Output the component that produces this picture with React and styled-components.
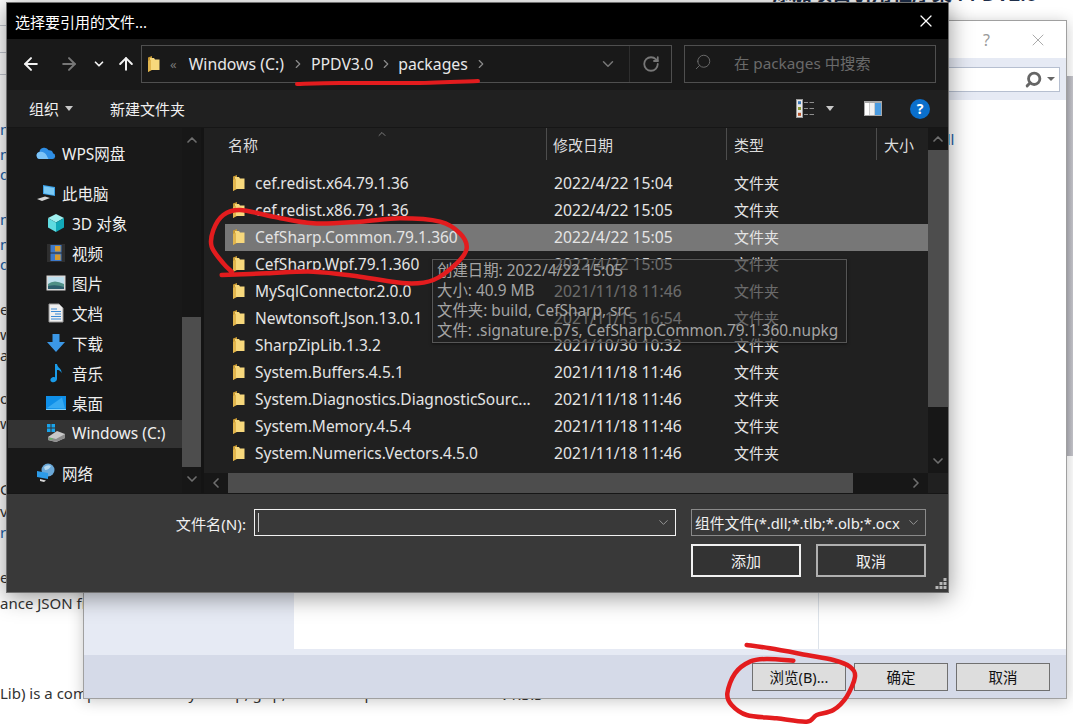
import React from "react";
import styled, { createGlobalStyle } from "styled-components";
import {
  ArrowLeft,
  ArrowRight,
  ArrowUp,
  ChevronDown,
  ChevronLeft,
  ChevronRight,
  ChevronUp,
  RotateCw,
  Search,
  X,
} from "lucide-react";

const FONT = `"Noto Sans", "Noto Sans CJK SC", sans-serif`;

const GlobalStyle = createGlobalStyle`
  html, body {
    margin: 0;
    padding: 0;
    background: #fff;
  }
  body {
    font-family: ${FONT};
    font-size: 15px;
  }
`;

const Desktop = styled.div`
  position: relative;
  width: 1073px;
  height: 725px;
  overflow: hidden;
  background: #fff;
`;

/* page behind the two windows */
const PageLine = styled.div`
  position: absolute;
  left: 0;
  top: ${(p) => p.$top}px;
  height: 22px;
  line-height: 22px;
  white-space: nowrap;
  font-size: 15px;
  color: ${(p) => (p.$link ? "#1c62a8" : "#333")};
`;

const PageRule = styled.div`
  position: absolute;
  left: 0;
  top: ${(p) => p.$top}px;
  width: 8px;
  height: 1px;
  background: #c4c8d0;
`;

const PageHeading = styled.div`
  position: absolute;
  left: 772px;
  top: -19px;
  font-size: 20px;
  line-height: 26px;
  font-weight: 600;
  color: #1f2f4a;
  white-space: nowrap;
`;

const PageVersion = styled.div`
  position: absolute;
  left: 500px;
  top: 683px;
  font-size: 15px;
  line-height: 22px;
  color: #333;
`;

const PageScroll = styled.div`
  position: absolute;
  right: 0;
  top: 76px;
  width: 8px;
  height: 380px;
  background: linear-gradient(90deg, #a9a9b0, #c8c8ce);
`;

/* reference manager window, mostly hidden */
const ManagerWindow = styled.div`
  position: absolute;
  left: 83px;
  top: 20px;
  width: 982px;
  height: 677px;
  display: flex;
  flex-direction: column;
  background: #fff;
  border: 1px solid #a0a0a0;
  box-shadow: 0 2px 14px rgba(0, 0, 0, 0.22);
`;

const ManagerTitle = styled.div`
  height: 37px;
  display: flex;
  align-items: center;
  justify-content: flex-end;
  flex-shrink: 0;
  gap: 38px;
  padding-right: 18px;
  color: #9a9a9a;
`;

const HelpMark = styled.span`
  font-size: 16px;
  line-height: 1;
`;

const ManagerSearchRow = styled.div`
  height: 42px;
  flex-shrink: 0;
  display: flex;
  align-items: center;
  justify-content: flex-end;
  padding-right: 6px;
  background: #e6eaf4;
`;

const ManagerSearch = styled.div`
  width: 300px;
  height: 25px;
  display: flex;
  align-items: center;
  justify-content: flex-end;
  gap: 5px;
  padding-right: 4px;
  box-sizing: border-box;
  background: #fff;
  border: 1px solid #b6bfd0;
`;

const SmallCaret = styled.span`
  width: 0;
  height: 0;
  border-left: 4px solid transparent;
  border-right: 4px solid transparent;
  border-top: 4px solid #666;
`;

const ManagerBody = styled.div`
  flex: 1;
  display: flex;
  background: #fff;
`;

const ManagerLeft = styled.div`
  width: 210px;
  background: #e6eaf4;
`;

const ManagerCenter = styled.div`
  width: 524px;
  border-right: 1px solid #dde3ea;
`;

const ManagerRight = styled.div`
  flex: 1;
  padding: 29px 0 0 50px;
  font-size: 15px;
  line-height: 20px;
  color: #1c62a8;
  white-space: nowrap;
`;

const ManagerStrip = styled.div`
  height: 6px;
  flex-shrink: 0;
  background: #e6eaf4;
`;

const ManagerFooter = styled.div`
  height: 43px;
  flex-shrink: 0;
  display: flex;
  align-items: center;
  justify-content: flex-end;
  gap: 8px;
  padding-right: 16px;
  background: #d5dae8;
`;

const ManagerButton = styled.div`
  width: 94px;
  height: 28px;
  box-sizing: border-box;
  display: flex;
  align-items: center;
  justify-content: center;
  background: #dddddd;
  border: 1px solid #707070;
  color: #111;
  font-size: 14.5px;
`;

/* file picker dialog */
const Dialog = styled.div`
  position: absolute;
  left: 6px;
  top: 2px;
  width: 941px;
  height: 589px;
  display: flex;
  flex-direction: column;
  background: #202020;
  border: 1px solid #707070;
  box-shadow: 0 4px 22px rgba(0, 0, 0, 0.42);
  color: #fff;
`;

const TitleBar = styled.div`
  height: 36px;
  flex-shrink: 0;
  display: flex;
  align-items: center;
  justify-content: space-between;
  padding: 0 12px 0 8px;
  background: #000;
  font-size: 15px;
`;

const NavBar = styled.div`
  height: 51px;
  flex-shrink: 0;
  display: flex;
  align-items: center;
  padding: 0 0 2px 5px;
  box-sizing: border-box;
  background: #191919;
`;

const NavSlot = styled.div`
  width: ${(p) => p.$w}px;
  display: flex;
  justify-content: center;
  flex-shrink: 0;
  color: ${(p) => (p.$dim ? "#777" : "#f2f2f2")};
`;

const PathBox = styled.div`
  width: 531px;
  height: 38px;
  box-sizing: border-box;
  display: flex;
  align-items: center;
  border: 1px solid #4f4f4f;
  padding-left: 5px;
  flex-shrink: 0;
`;

const Crumbs = styled.div`
  flex: 1;
  display: flex;
  align-items: center;
  color: #e8e8e8;
  font-size: 15.8px;
`;

const CrumbText = styled.span`
  margin-left: ${(p) => p.$ml || 0}px;
`;

const CrumbMark = styled.span`
  display: flex;
  margin-left: ${(p) => p.$ml}px;
  color: #8a8a8a;
`;

const GreyQuote = styled.span`
  margin-left: 10px;
  color: #777;
  font-size: 13px;
`;

const PathDrop = styled.div`
  width: 42px;
  display: flex;
  justify-content: center;
  color: #777;
`;

const PathRefresh = styled.div`
  width: 41px;
  height: 100%;
  display: flex;
  align-items: center;
  justify-content: center;
  border-left: 1px solid #2e2e2e;
  color: #777;
`;

const SearchBox = styled.div`
  width: 252px;
  height: 38px;
  margin-left: 12px;
  box-sizing: border-box;
  display: flex;
  align-items: center;
  gap: 22px;
  padding: 0 0 3px 9px;
  border: 1px solid #4f4f4f;
  color: #6a6a6a;
  font-size: 15.3px;
`;

const FlipIcon = styled.span`
  display: flex;
  transform: scaleX(-1);
`;

const ToolBar = styled.div`
  height: 38px;
  flex-shrink: 0;
  display: flex;
  align-items: center;
  padding-left: 22px;
  background: #202020;
  color: #f0f0f0;
  font-size: 15px;
  border-bottom: 1px solid #161616;
  box-sizing: border-box;
`;

const ToolLabel = styled.span`
  margin-left: ${(p) => p.$ml || 0}px;
`;

const ToolRight = styled.div`
  margin-left: auto;
  display: flex;
  align-items: center;
  padding-right: 18px;
`;

const ToolCaret = styled.span`
  width: 0;
  height: 0;
  margin-left: ${(p) => p.$ml}px;
  margin-right: ${(p) => p.$mr || 0}px;
  border-left: 4px solid transparent;
  border-right: 4px solid transparent;
  border-top: 5px solid #c8c8c8;
`;

const HelpBadge = styled.span`
  width: 20px;
  height: 20px;
  margin-left: 28px;
  border-radius: 50%;
  display: flex;
  align-items: center;
  justify-content: center;
  background: #0a6fcc;
  color: #fff;
  font-size: 14px;
  font-weight: 700;
`;

const Body = styled.div`
  flex: 1;
  min-height: 0;
  display: flex;
`;

const Sidebar = styled.div`
  width: 194px;
  display: flex;
  flex-shrink: 0;
  background: #191919;
  border-right: 3px solid #141414;
`;

const TreeList = styled.div`
  width: 175px;
  padding-top: 12px;
  flex-shrink: 0;
`;

const TreeGroup = styled.div`
  display: flex;
  flex-direction: column;
  gap: 2px;
  margin-bottom: 12px;
`;

const TreeItem = styled.div`
  height: 28px;
  display: flex;
  align-items: center;
  gap: 6px;
  margin-left: 1px;
  padding-left: ${(p) => (p.$child ? 38 : 28)}px;
  padding-bottom: 2px;
  box-sizing: border-box;
  background: ${(p) => (p.$active ? "#333" : "transparent")};
  color: #f0f0f0;
  font-size: 15.5px;
  white-space: nowrap;
`;

const VScroll = styled.div`
  width: ${(p) => p.$w}px;
  flex-shrink: 0;
  display: flex;
  flex-direction: column;
  background: #171717;
  color: #6e6e6e;
`;

const ScrollCap = styled.div`
  height: ${(p) => p.$h}px;
  display: flex;
  align-items: center;
  justify-content: center;
  flex-shrink: 0;
`;

const VSpacer = styled.div`
  height: ${(p) => p.$h}px;
  flex-shrink: 0;
`;

const ScrollThumb = styled.div`
  height: ${(p) => p.$h}px;
  flex-shrink: 0;
  background: #4d4d4d;
`;

const ListPanel = styled.div`
  flex: 1;
  min-width: 0;
  display: flex;
  flex-direction: column;
`;

const ListMain = styled.div`
  flex: 1;
  min-height: 0;
  display: flex;
`;

const ListArea = styled.div`
  position: relative;
  flex: 1;
  min-width: 0;
`;

const HeaderRow = styled.div`
  height: 34px;
  display: grid;
  grid-template-columns: 342px 180px 150px 1fr;
  color: #dcdcdc;
  font-size: 15px;
`;

const HeaderCell = styled.div`
  display: flex;
  align-items: center;
  height: 32px;
  padding-left: ${(p) => p.$pl}px;
  border-left: ${(p) => (p.$first ? "none" : "1px solid #4d4d4d")};
  white-space: nowrap;
`;

const SortMark = styled.span`
  position: absolute;
  left: 172px;
  top: 0;
  display: flex;
  color: #9a9a9a;
`;

const Rows = styled.div`
  padding: 8px 0 0 21px;
`;

const FileRow = styled.div`
  height: 27px;
  display: grid;
  grid-template-columns: 321px 180px 150px;
  align-items: center;
  padding-bottom: 2px;
  box-sizing: border-box;
  background: ${(p) => (p.$selected ? "#777" : "transparent")};
  color: #e4e4e4;
  white-space: nowrap;
`;

const NameCell = styled.div`
  display: flex;
  align-items: center;
  gap: 10px;
  padding-left: 7px;
  font-size: 15.5px;
`;

const DataCell = styled.div`
  padding-left: 8px;
  font-size: ${(p) => (p.$date ? "15.7px" : "15px")};
`;

const HScroll = styled.div`
  height: 20px;
  flex-shrink: 0;
  display: flex;
  align-items: center;
  color: #6e6e6e;
`;

const HTrack = styled.div`
  flex: 1;
  height: 100%;
  display: flex;
  justify-content: flex-start;
  background: #171717;
`;

const HCap = styled.div`
  width: ${(p) => p.$w}px;
  display: flex;
  align-items: center;
  justify-content: center;
  flex-shrink: 0;
  margin-left: ${(p) => (p.$end ? "auto" : 0)};
`;

const HThumb = styled.div`
  width: 625px;
  flex-shrink: 0;
  background: #4d4d4d;
`;

const HCorner = styled.div`
  width: 20px;
  flex-shrink: 0;
`;

const InfoTip = styled.div`
  position: absolute;
  left: 228px;
  top: 131px;
  width: 415px;
  height: 84px;
  padding: 1px 0 0 4px;
  box-sizing: border-box;
  background: rgba(32, 32, 32, 0.62);
  border: 1px solid #565656;
  box-shadow: 0 1px 3px rgba(0, 0, 0, 0.5);
  color: #a4a4a4;
  font-size: 15.4px;
  line-height: 20px;
  white-space: nowrap;
`;

const Footer = styled.div`
  height: 99px;
  flex-shrink: 0;
  position: relative;
  display: grid;
  grid-template-columns: 239px 422px 235px;
  grid-template-rows: 27px 33px;
  row-gap: 8px;
  padding-top: 15px;
  box-sizing: border-box;
  background: #393939;
  border-top: 1px solid #161616;
`;

const FileLabel = styled.div`
  display: flex;
  align-items: center;
  justify-content: flex-end;
  color: #f0f0f0;
  font-size: 15.2px;
`;

const FileInput = styled.div`
  margin-left: 8px;
  width: 422px;
  height: 27px;
  box-sizing: border-box;
  display: flex;
  align-items: center;
  justify-content: space-between;
  padding: 0 4px 0 3px;
  border: 1px solid #f2f2f2;
  color: #aaa;
`;

const TextCaret = styled.span`
  width: 1px;
  height: 19px;
  background: #cfcfcf;
`;

const FilterBox = styled.div`
  margin-left: 23px;
  width: 235px;
  height: 27px;
  box-sizing: border-box;
  display: flex;
  align-items: center;
  justify-content: space-between;
  padding: 0 4px 0 3px;
  border: 1px solid #8a8a8a;
  color: #aaa;
`;

const FilterText = styled.span`
  width: 208px;
  overflow: hidden;
  white-space: nowrap;
  color: #f0f0f0;
  font-size: 14.8px;
`;

const ButtonRow = styled.div`
  grid-column: 3;
  margin-left: 23px;
  width: 235px;
  display: flex;
  justify-content: space-between;
`;

const DialogButton = styled.div`
  width: 110px;
  height: 33px;
  box-sizing: border-box;
  display: flex;
  align-items: center;
  justify-content: center;
  border: 2px solid ${(p) => (p.$primary ? "#f2f2f2" : "#b0b0b0")};
  background: #333;
  color: #f0f0f0;
  font-size: 15px;
`;

const Grip = styled.svg`
  position: absolute;
  right: 1px;
  bottom: 2px;
`;

const InkLayer = styled.svg`
  position: absolute;
  inset: 0;
  pointer-events: none;
`;

const FolderIcon = () => (
  <svg width="13" height="18" viewBox="0 0 13 18">
    <path d="M1 2.5 L5 1 L5 15 L1 17 Z" fill="#c99a34" />
    <path d="M3 3 H7 L8 4.5 H12.5 V15 H3 Z" fill="#f7d87c" />
    <path d="M1 6 L4 4.5 V15 L1 17 Z" fill="#e2b64e" />
  </svg>
);

const CloudIcon = () => (
  <svg width="20" height="16" viewBox="0 0 20 16">
    <path d="M4 14 a3.6 3.6 0 0 1 -.6-7.1 a5 5 0 0 1 9.3-1.6 a3.6 3.6 0 0 1 4.3 3 a2.9 2.9 0 0 1 -.6 5.7 Z" fill="#2f8fe6" />
    <path d="M4 14 a3.6 3.6 0 0 1 -.6-7.1 c3 -.8 6 1 7 3 l2 4 Z" fill="#7cc3f7" />
  </svg>
);

const ComputerIcon = () => (
  <svg width="20" height="20" viewBox="0 0 20 20">
    <path d="M7 2 L19 4 V13 L7 11 Z" fill="#3aa0e8" />
    <path d="M8 3.2 L18 5 V12 L8 10.2 Z" fill="#7ccaf5" />
    <path d="M1 16 L9 13.5 L14 15 L6 18 Z" fill="#d4d4d4" />
  </svg>
);

const CubeIcon = () => (
  <svg width="20" height="20" viewBox="0 0 20 20">
    <path d="M10 1 L18 5 L10 9.5 L2 5 Z" fill="#9ff0ef" />
    <path d="M2 5 L10 9.5 V19 L2 14.5 Z" fill="#5fdbe0" />
    <path d="M18 5 L10 9.5 V19 L18 14.5 Z" fill="#12a9b8" />
  </svg>
);

const FilmIcon = () => (
  <svg width="20" height="20" viewBox="0 0 20 20">
    <rect x="1" y="1" width="18" height="18" fill="#2e2e2e" />
    <rect x="4.5" y="2" width="11" height="7.5" fill="#3d78c8" />
    <rect x="4.5" y="10.5" width="11" height="7.5" fill="#3d78c8" />
    <rect x="9" y="3" width="5.5" height="5.5" fill="#d69a2e" />
    <rect x="9" y="11.5" width="5.5" height="5.5" fill="#d69a2e" />
  </svg>
);

const PictureIcon = () => (
  <svg width="20" height="16" viewBox="0 0 20 16">
    <rect x="0.5" y="0.5" width="19" height="15" fill="#d8d8d8" />
    <rect x="2" y="2" width="16" height="12" fill="#bfe0ee" />
    <path d="M2 9 Q8 4 18 9 V14 H2 Z" fill="#4f8f86" />
    <path d="M2 11 Q10 9 18 12 V14 H2 Z" fill="#2d5d6d" />
  </svg>
);

const DocIcon = () => (
  <svg width="20" height="20" viewBox="-2 0 20 20">
    <path d="M1 1 H11 L15 5 V19 H1 Z" fill="#efefef" stroke="#9a9a9a" />
    <path d="M3 6 H9 M3 8.5 H13 M7 11 H13 M3 13.5 H13 M3 16 H13" stroke="#3a8ad6" strokeWidth="1.2" />
  </svg>
);

const DownloadIcon = () => (
  <svg width="20" height="18" viewBox="0 0 20 18">
    <path d="M6.5 0 H13.5 V8 H19 L10 18 L1 8 H6.5 Z" fill="#3b97e6" />
  </svg>
);

const MusicIcon = () => (
  <svg width="20" height="20" viewBox="-3 0 20 20">
    <path d="M6 1 H8 C8.5 5 13 5.5 12.5 10 C11.5 7.5 9.5 7 8 7 V16 C8 18.5 5 19.8 2.8 19 C0.6 18 1.2 15 3.5 14.2 C4.5 13.9 5.4 14 6 14.4 Z" fill="#1a9be8" />
  </svg>
);

const DesktopIcon = () => (
  <svg width="20" height="14" viewBox="0 0 20 14">
    <rect width="20" height="14" fill="#0f8fe8" />
    <path d="M1 12 L16 1.5 L19 12.5 Z" fill="#35a9f2" />
    <path d="M0 13 H20 V14 H0 Z" fill="#7fd0fa" />
  </svg>
);

const DriveIcon = () => (
  <svg width="20" height="20" viewBox="0 0 20 20">
    <path d="M1 1 H4.5 V4.5 H1 Z M5.5 1 H9 V4.5 H5.5 Z M1 5.5 H4.5 V9 H1 Z M5.5 5.5 H9 V9 H5.5 Z" fill="#19a4ec" />
    <path d="M2 14 L11 8 L19 11 V15 L10 19 L2 17 Z" fill="#c8c8c8" />
    <path d="M2 14 L10 16 L19 11 V15 L10 19 L2 17 Z" fill="#8c8c8c" />
    <rect x="3.5" y="15.4" width="3" height="1" fill="#4ed04e" />
  </svg>
);

const NetworkIcon = () => (
  <svg width="20" height="20" viewBox="0 0 20 20">
    <circle cx="12" cy="7" r="6.5" fill="#6aa8d8" />
    <path d="M8 4 Q12 1 15 3 Q13 7 9 7 Z" fill="#b6d9f0" />
    <path d="M1 8 L12 10 V16 L1 14 Z" fill="#2c9be8" />
    <path d="M4 16 L10 17.5 L8 19 L4 18 Z" fill="#d8d8d8" />
  </svg>
);

const ViewIcon = () => (
  <svg width="18" height="19" viewBox="0 0 18 19">
    <rect x="0.5" y="0.5" width="6" height="18" fill="#e8e8e8" stroke="#9a9a9a" />
    <rect x="2" y="2.2" width="3" height="3" fill="#3a78b8" />
    <rect x="2" y="8" width="3" height="3" fill="#8a9a3a" />
    <rect x="2" y="13.8" width="3" height="3" fill="#b8532a" />
    <path d="M8 3.5 H12 M13.5 3.5 H18 M8 9.5 H12 M13.5 9.5 H18 M8 15.5 H12 M13.5 15.5 H18" stroke="#8e8e8e" strokeWidth="1.2" />
  </svg>
);

const PaneIcon = () => (
  <svg width="18" height="15" viewBox="0 0 18 15">
    <rect width="18" height="15" fill="#a8a8a8" />
    <rect x="1" y="2" width="4" height="12" fill="#fff" />
    <rect x="5.5" y="2" width="5" height="12" fill="#f0f0f0" />
    <rect x="11" y="2" width="6" height="12" fill="#4a9be0" />
  </svg>
);

// turns a few hand picked points into a smooth pen stroke
const smooth = (pts) => {
  let d = `M${pts[0][0]} ${pts[0][1]}`;
  for (let i = 0; i < pts.length - 1; i++) {
    const p0 = pts[i - 1] || pts[i];
    const p1 = pts[i];
    const p2 = pts[i + 1];
    const p3 = pts[i + 2] || p2;
    const c1x = p1[0] + (p2[0] - p0[0]) / 6;
    const c1y = p1[1] + (p2[1] - p0[1]) / 6;
    const c2x = p2[0] - (p3[0] - p1[0]) / 6;
    const c2y = p2[1] - (p3[1] - p1[1]) / 6;
    d += ` C${c1x} ${c1y} ${c2x} ${c2y} ${p2[0]} ${p2[1]}`;
  }
  return d;
};

const scale3 = (pts, ox, oy) => pts.map(([x, y]) => [x / 3 + ox, y / 3 + oy]);

const UNDERLINE = [[297, 84], [340, 83], [415, 83], [478, 81]];

const LIST_RING = scale3(
  [[65, 345], [200, 340], [340, 335], [480, 350], [620, 370], [700, 360], [770, 310], [800, 265], [780, 220], [720, 185], [600, 175], [480, 185], [340, 190], [220, 170], [120, 150], [70, 165], [40, 210], [35, 260], [70, 310], [95, 335]],
  200,
  160
);

const BROWSE_RING = scale3(
  [[380, 555], [450, 565], [560, 585], [640, 600], [690, 620], [705, 650], [680, 710], [640, 750], [590, 765], [560, 785], [470, 775], [380, 765], [335, 735], [322, 700], [345, 640], [390, 605], [440, 597], [520, 602]],
  620,
  460
);

const PAGE_LINES = [
  { top: 118, text: "n", link: true },
  { top: 143, text: "m", link: true },
  { top: 163, text: "d", link: true },
  { top: 208, text: "m", link: true },
  { top: 233, text: "m", link: true },
  { top: 253, text: "d", link: true },
  { top: 298, text: "e" },
  { top: 323, text: "w" },
  { top: 344, text: " a" },
  { top: 387, text: "o" },
  { top: 412, text: "w" },
  { top: 478, text: "G" },
  { top: 500, text: "vi" },
  { top: 521, text: "r", link: true },
  { top: 566, text: "e" },
  { top: 592, text: "ance JSON framework" },
  { top: 682, text: "Lib) is a compression library for zip, gzip, tar and bzip2" },
];

const PLACES = [
  { Icon: ComputerIcon, label: "此电脑" },
  { Icon: CubeIcon, label: "3D 对象", child: true },
  { Icon: FilmIcon, label: "视频", child: true },
  { Icon: PictureIcon, label: "图片", child: true },
  { Icon: DocIcon, label: "文档", child: true },
  { Icon: DownloadIcon, label: "下载", child: true },
  { Icon: MusicIcon, label: "音乐", child: true },
  { Icon: DesktopIcon, label: "桌面", child: true },
  { Icon: DriveIcon, label: "Windows (C:)", child: true, active: true },
];

const FILES = [
  ["cef.redist.x64.79.1.36", "2022/4/22 15:04"],
  ["cef.redist.x86.79.1.36", "2022/4/22 15:05"],
  ["CefSharp.Common.79.1.360", "2022/4/22 15:05", true],
  ["CefSharp.Wpf.79.1.360", "2022/4/22 15:05"],
  ["MySqlConnector.2.0.0", "2021/11/18 11:46"],
  ["Newtonsoft.Json.13.0.1", "2021/11/15 16:54"],
  ["SharpZipLib.1.3.2", "2021/10/30 10:32"],
  ["System.Buffers.4.5.1", "2021/11/18 11:46"],
  ["System.Diagnostics.DiagnosticSourc...", "2021/11/18 11:46"],
  ["System.Memory.4.5.4", "2021/11/18 11:46"],
  ["System.Numerics.Vectors.4.5.0", "2021/11/18 11:46"],
];

const App = () => {
  return (
    <Desktop>
      <GlobalStyle />

      {PAGE_LINES.map((line) => (
        <PageLine key={line.top} $top={line.top} $link={line.link}>
          {line.text}
        </PageLine>
      ))}
      <PageRule $top={25} />
      <PageRule $top={52} />
      <PageRule $top={74} />
      <PageHeading>添加项目引用程序集 PPDV2.0</PageHeading>
      <PageVersion>V1.3.3</PageVersion>
      <PageScroll />

      <ManagerWindow>
        <ManagerTitle>
          <HelpMark>?</HelpMark>
          <X size={20} strokeWidth={1} />
        </ManagerTitle>
        <ManagerSearchRow>
          <ManagerSearch>
            <FlipIcon>
              <Search size={17} strokeWidth={4} color="#666" />
            </FlipIcon>
            <SmallCaret />
          </ManagerSearch>
        </ManagerSearchRow>
        <ManagerBody>
          <ManagerLeft />
          <ManagerCenter />
          <ManagerRight>CefSharp.dll</ManagerRight>
        </ManagerBody>
        <ManagerStrip />
        <ManagerFooter>
          <ManagerButton>浏览(B)...</ManagerButton>
          <ManagerButton>确定</ManagerButton>
          <ManagerButton>取消</ManagerButton>
        </ManagerFooter>
      </ManagerWindow>

      <Dialog>
        <TitleBar>
          <span>选择要引用的文件...</span>
          <X size={20} strokeWidth={1.5} />
        </TitleBar>

        <NavBar>
          <NavSlot $w={37}>
            <ArrowLeft size={20} strokeWidth={2.4} />
          </NavSlot>
          <NavSlot $w={39} $dim>
            <ArrowRight size={20} strokeWidth={2.4} />
          </NavSlot>
          <NavSlot $w={22}>
            <ChevronDown size={14} strokeWidth={3} />
          </NavSlot>
          <NavSlot $w={31}>
            <ArrowUp size={20} strokeWidth={2.4} />
          </NavSlot>
          <PathBox>
            <Crumbs>
              <FolderIcon />
              <GreyQuote>«</GreyQuote>
              <CrumbText $ml={12}>Windows (C:)</CrumbText>
              <CrumbMark $ml={7}>
                <ChevronRight size={14} />
              </CrumbMark>
              <CrumbText $ml={6}>PPDV3.0</CrumbText>
              <CrumbMark $ml={6}>
                <ChevronRight size={14} />
              </CrumbMark>
              <CrumbText $ml={5}>packages</CrumbText>
              <CrumbMark $ml={6}>
                <ChevronRight size={14} />
              </CrumbMark>
            </Crumbs>
            <PathDrop>
              <ChevronDown size={18} />
            </PathDrop>
            <PathRefresh>
              <RotateCw size={18} strokeWidth={2.4} />
            </PathRefresh>
          </PathBox>
          <SearchBox>
            <FlipIcon>
              <Search size={18} strokeWidth={1.3} />
            </FlipIcon>
            <span>在 packages 中搜索</span>
          </SearchBox>
        </NavBar>

        <ToolBar>
          <ToolLabel>组织</ToolLabel>
          <ToolCaret $ml={6} />
          <ToolLabel $ml={37}>新建文件夹</ToolLabel>
          <ToolRight>
            <ViewIcon />
            <ToolCaret $ml={12} $mr={30} />
            <PaneIcon />
            <HelpBadge>?</HelpBadge>
          </ToolRight>
        </ToolBar>

        <Body>
          <Sidebar>
            <TreeList>
              <TreeGroup>
                <TreeItem>
                  <CloudIcon />
                  WPS网盘
                </TreeItem>
              </TreeGroup>
              <TreeGroup>
                {PLACES.map(({ Icon, label, child, active }) => (
                  <TreeItem key={label} $child={child} $active={active}>
                    <Icon />
                    {label}
                  </TreeItem>
                ))}
              </TreeGroup>
              <TreeGroup>
                <TreeItem>
                  <NetworkIcon />
                  网络
                </TreeItem>
              </TreeGroup>
            </TreeList>
            <VScroll $w={19}>
              <ScrollCap $h={24}>
                <ChevronUp size={16} strokeWidth={2.5} />
              </ScrollCap>
              <VSpacer $h={165} />
              <ScrollThumb $h={150} />
              <ScrollCap $h={24}>
                <ChevronDown size={16} strokeWidth={2.5} />
              </ScrollCap>
            </VScroll>
          </Sidebar>

          <ListPanel>
            <ListMain>
              <ListArea>
                <HeaderRow>
                  <HeaderCell $first $pl={24}>
                    名称
                  </HeaderCell>
                  <HeaderCell $pl={6}>修改日期</HeaderCell>
                  <HeaderCell $pl={7}>类型</HeaderCell>
                  <HeaderCell $pl={7}>大小</HeaderCell>
                </HeaderRow>
                <SortMark>
                  <ChevronUp size={12} strokeWidth={1.5} />
                </SortMark>
                <Rows>
                  {FILES.map(([name, date, selected]) => (
                    <FileRow key={name} $selected={selected}>
                      <NameCell>
                        <FolderIcon />
                        {name}
                      </NameCell>
                      <DataCell $date>{date}</DataCell>
                      <DataCell>文件夹</DataCell>
                    </FileRow>
                  ))}
                </Rows>
                <InfoTip>
                  <div>创建日期: 2022/4/22 15:05</div>
                  <div>大小: 40.9 MB</div>
                  <div>文件夹: build, CefSharp, src</div>
                  <div>文件: .signature.p7s, CefSharp.Common.79.1.360.nupkg</div>
                </InfoTip>
              </ListArea>
              <VScroll $w={20}>
                <ScrollCap $h={22}>
                  <ChevronUp size={16} strokeWidth={2.5} />
                </ScrollCap>
                <ScrollThumb $h={257} />
                <VSpacer $h={42} />
                <ScrollCap $h={23}>
                  <ChevronDown size={16} strokeWidth={2.5} />
                </ScrollCap>
              </VScroll>
            </ListMain>
            <HScroll>
              <HTrack>
                <HCap $w={24}>
                  <ChevronLeft size={16} strokeWidth={2.5} />
                </HCap>
                <HThumb />
                <HCap $w={24} $end>
                  <ChevronRight size={16} strokeWidth={2.5} />
                </HCap>
              </HTrack>
              <HCorner />
            </HScroll>
          </ListPanel>
        </Body>

        <Footer>
          <FileLabel>文件名(N):</FileLabel>
          <FileInput>
            <TextCaret />
            <ChevronDown size={15} strokeWidth={1.3} />
          </FileInput>
          <FilterBox>
            <FilterText>组件文件(*.dll;*.tlb;*.olb;*.ocx</FilterText>
            <ChevronDown size={15} strokeWidth={1.3} />
          </FilterBox>
          <ButtonRow>
            <DialogButton $primary>添加</DialogButton>
            <DialogButton>取消</DialogButton>
          </ButtonRow>
          <Grip width="12" height="12" viewBox="0 0 12 12" fill="#b8b8b8">
            <rect x="8.5" y="0" width="3" height="3" />
            <rect x="4.5" y="4" width="3" height="3" />
            <rect x="8.5" y="4" width="3" height="3" />
            <rect x="0.5" y="8" width="3" height="3" />
            <rect x="4.5" y="8" width="3" height="3" />
            <rect x="8.5" y="8" width="3" height="3" />
          </Grip>
        </Footer>
      </Dialog>

      <InkLayer width="1073" height="725" viewBox="0 0 1073 725" fill="none" stroke="#e31c1e" strokeLinecap="round" strokeLinejoin="round">
        <path d={smooth(UNDERLINE)} strokeWidth="4" />
        <path d={smooth(LIST_RING)} strokeWidth="4.5" />
        <path d={smooth(BROWSE_RING)} strokeWidth="4.5" />
      </InkLayer>
    </Desktop>
  );
};

export default App;
